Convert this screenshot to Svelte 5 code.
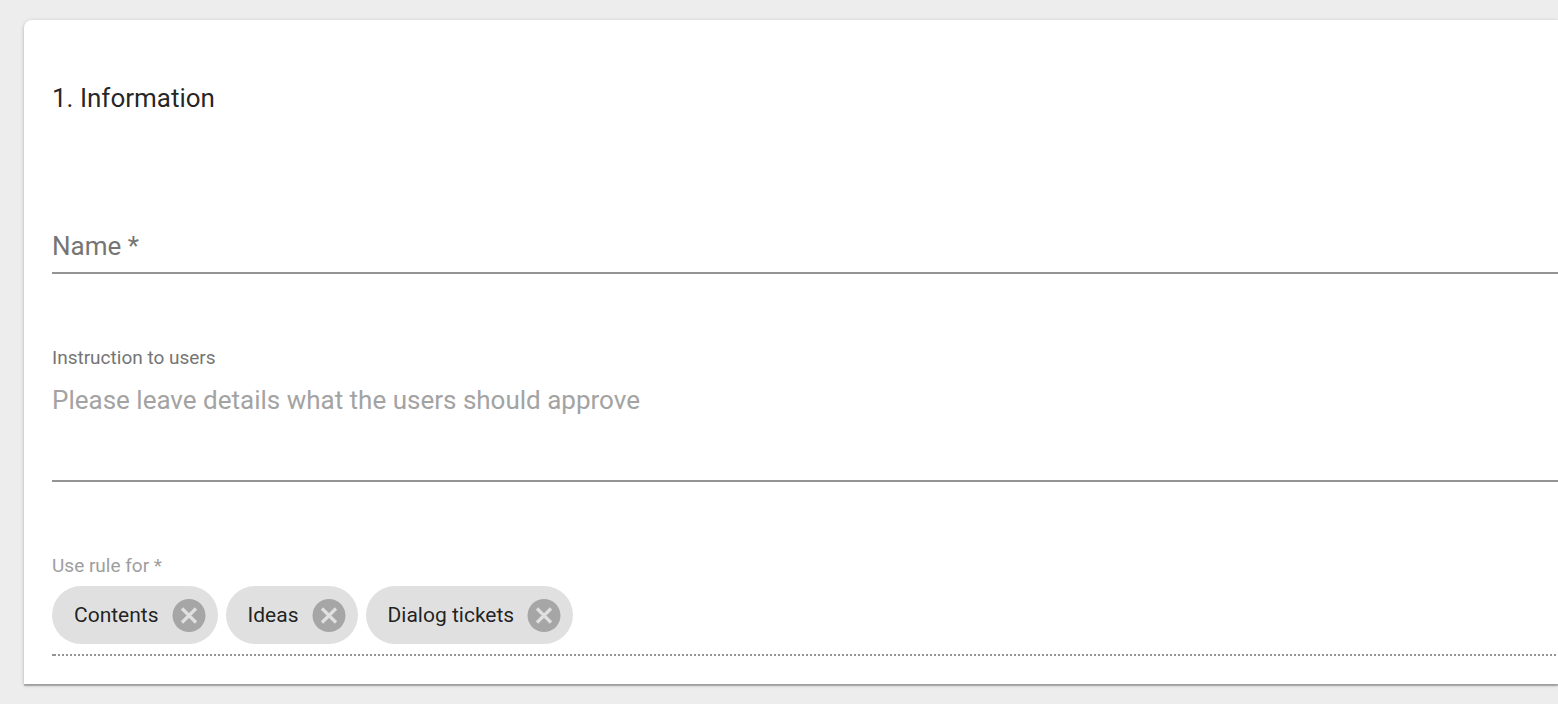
<script>
  let name = $state('');
  let instruction = $state('');
  let targets = $state(['Contents', 'Ideas', 'Dialog tickets']);

  function remove(target) {
    targets = targets.filter((item) => item !== target);
  }
</script>

<main class="page">
  <form class="card">
    <h2>1. Information</h2>

    <div class="name-field">
      <label for="name">Name *</label>
      <input id="name" type="text" required bind:value={name} />
    </div>

    <div class="text-field">
      <label for="instruction">Instruction to users</label>
      <textarea
        id="instruction"
        placeholder="Please leave details what the users should approve"
        bind:value={instruction}
      ></textarea>
    </div>

    <div class="chip-field" role="group" aria-labelledby="targets-label">
      <span class="chip-label" id="targets-label">Use rule for *</span>
      <div class="chips">
        {#each targets as target (target)}
          <div class="chip">
            <span>{target}</span>
            <button type="button" aria-label="Remove {target}" onclick={() => remove(target)}>
              <svg viewBox="0 0 34 34" aria-hidden="true">
                <circle cx="17" cy="17.5" r="16.5" fill="#a6a6a6" />
                <path d="M10 10.5 24 24.5M24 10.5 10 24.5" stroke="#e0e0e0" stroke-width="3.2" />
              </svg>
            </button>
          </div>
        {/each}
      </div>
    </div>
  </form>
</main>

<style>
  :global(body) {
    margin: 0;
    background: #ededed;
  }

  .page {
    padding: 20px 0 19px 24px;
    overflow: hidden;
    font-family: Roboto, sans-serif;
    color: rgba(0, 0, 0, 0.87);
  }

  .card {
    display: flex;
    flex-direction: column;
    padding: 60px 0 28px 28px;
    background: #fff;
    border-radius: 8px 0 0 0;
    box-shadow:
      0 2px 1px rgba(0, 0, 0, 0.24),
      0 1px 4px rgba(0, 0, 0, 0.2);
  }

  h2 {
    margin: 0;
    font-size: 26px;
    line-height: 36px;
    font-weight: 400;
  }

  .name-field {
    display: flex;
    align-items: center;
    margin-top: 112px;
    padding-bottom: 8px;
    border-bottom: 2px solid #949494;
    font-size: 26px;
    line-height: 36px;
    color: #757575;
  }

  input,
  textarea {
    box-sizing: border-box;
    min-width: 0;
    padding: 0;
    border: 0;
    outline: 0;
    background: transparent;
    font: inherit;
    color: rgba(0, 0, 0, 0.87);
  }

  input {
    flex: 1;
    margin-left: 8px;
    height: 36px;
  }

  .text-field {
    display: flex;
    flex-direction: column;
    margin-top: 72px;
    border-bottom: 2px solid #949494;
    font-size: 26px;
    line-height: 36px;
  }

  .text-field label,
  .chip-label {
    font-size: 19px;
    line-height: 24px;
    color: #757575;
  }

  textarea {
    display: block;
    height: 98px;
    margin-top: 12px;
    resize: none;
  }

  textarea::placeholder {
    color: #a3a3a3;
    opacity: 1;
  }

  .chip-field {
    display: flex;
    flex-direction: column;
    margin-top: 72px;
    padding-bottom: 12px;
    background:
      linear-gradient(#949494, #949494) left bottom / 2px 2px no-repeat,
      repeating-linear-gradient(90deg, transparent 0 2px, #949494 2px 4px) left bottom / 100% 2px no-repeat;
  }

  .chip-field .chip-label {
    color: #9e9e9e;
  }

  .chips {
    display: flex;
    flex-wrap: wrap;
    gap: 8px;
    margin-top: 8px;
  }

  .chip {
    display: flex;
    align-items: center;
    gap: 13px;
    height: 58px;
    box-sizing: border-box;
    padding: 0 12px 0 22px;
    border-radius: 29px;
    background: #e0e0e0;
    font-size: 21px;
    line-height: 28px;
  }

  button {
    width: 34px;
    height: 34px;
    padding: 0;
    border: 0;
    border-radius: 50%;
    background: none;
    cursor: pointer;
  }

  svg {
    display: block;
    width: 34px;
    height: 34px;
  }
</style>
